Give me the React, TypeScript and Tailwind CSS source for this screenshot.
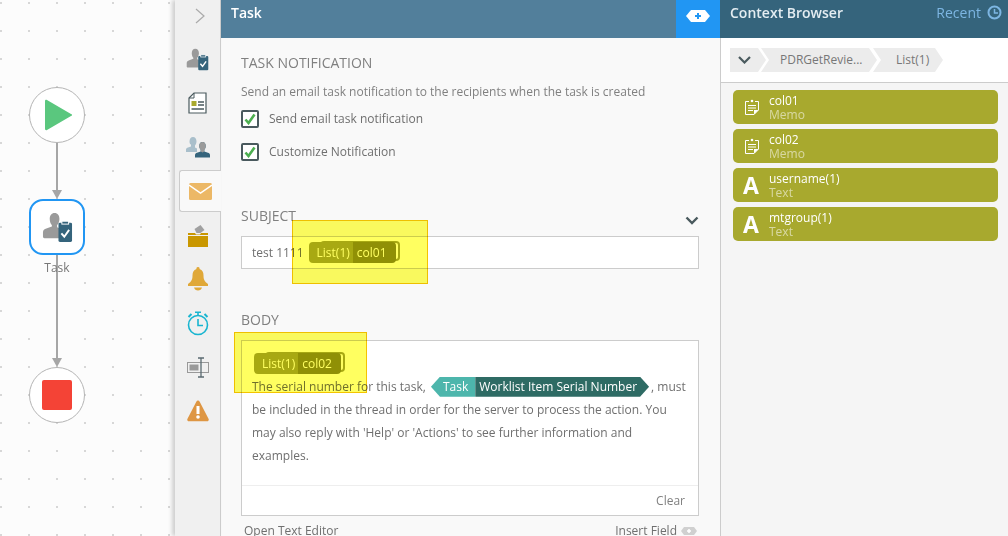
const font = { fontFamily: '"Open Sans", "Noto Sans", sans-serif' };

function UserClip({ size = 24 }: { size?: number }) {
  return (
    <svg width={size} height={size} viewBox="0 0 30 32">
      <path d="M12 1c3.2 0 5 2.6 5 6.2 0 2.6-1 5-2.4 6.2v2.4l2.4 1V27H1.5c-.8 0-1.5-.6-1.5-1.4v-4.8c0-2 1.6-3.200 3.500-3.800l5.700-2v-1.600C7.800 12.200 7 9.800 7 7.200 7 3.600 8.800 1 12 1z" fill="#9a9a9a" />
      <rect x="16" y="11" width="14" height="20" rx="1.500" fill="#35647c" />
      <rect x="19.500" y="9.500" width="7" height="3" fill="#35647c" stroke="#fff" strokeWidth="1" />
      <path d="M19 22l3 3.500 5-7" fill="none" stroke="#fff" strokeWidth="2" />
    </svg>
  );
}

function Check() {
  return (
    <div className="flex h-[18px] w-[18px] items-center justify-center rounded-[2px] border-2 border-[#4a5a5e] bg-white">
      <svg width="12" height="12" viewBox="0 0 12 12">
        <path d="M1.500 6.500l3 3.500 6-8.500" fill="none" stroke="#4caf50" strokeWidth="2.600" />
      </svg>
    </div>
  );
}

function SideIcon({ children, active }: { children: React.ReactNode; active?: boolean }) {
  return (
    <div
      className={
        active
          ? "relative z-10 -mr-px my-px ml-[4px] flex h-[42px] items-center justify-center rounded-l-[3px] border border-r-0 border-[#ccc] bg-[#f9f9f9]"
          : "flex h-[44px] items-center justify-center"
      }
    >
      {children}
    </div>
  );
}

function FieldPill({ label }: { label: string }) {
  return (
    <span className="relative inline-flex h-[21px] items-center text-[12px] text-white">
      <span className="absolute -right-[4px] -top-[1px] h-[20px] w-[80px] rounded-[4px] border-2 border-l-0 border-[#a8a92e] bg-white" />
      <span className="relative flex h-[21px] items-center rounded-l-[4px] bg-[#a8a92e] pl-[8px] pr-[3px]">List(1)</span>
      <span className="relative flex h-[21px] items-center rounded-r-[4px] bg-[#909010] pl-[4px] pr-[9px]">{label}</span>
    </span>
  );
}

function MemoIcon() {
  return (
    <svg width="16" height="17" viewBox="0 0 16 17" fill="none" stroke="#fff" strokeWidth="1">
      <path d="M5 2.500H1.500v13H10l4.500-4.500V2.500H11" />
      <circle cx="8" cy="2" r="1.300" fill="#fff" stroke="none" />
      <path d="M4 6.500h8M4 9h8M4 11.500h5" />
      <path d="M10 15.500V11h4.500z" fill="#fff" stroke="none" />
    </svg>
  );
}

function ContextItem({ name, type, memo }: { name: string; type: string; memo?: boolean }) {
  return (
    <div className="flex h-[34px] items-center rounded-[5px] bg-[#a8a92e] pl-[11px]">
      <div className="flex w-[25px] shrink-0 items-center">
        {memo ? <MemoIcon /> : <span className="-ml-px text-[23px] font-bold leading-none text-white">A</span>}
      </div>
      <div className="pt-[2px] text-[12px] leading-[14.500px]">
        <div className="text-white">{name}</div>
        <div className="text-white/55">{type}</div>
      </div>
    </div>
  );
}

export default function App() {
  return (
    <div className="flex h-[536px] w-[1008px] overflow-hidden bg-white" style={font}>
      {/* Canvas */}
      <div className="relative w-[175px] shrink-0 bg-[#fcfcfc] bg-[radial-gradient(#d4d4d4_0.7px,transparent_0.8px)] bg-[size:28px_28px] bg-[position:-13px_-11px]">
        <div className="absolute left-[56px] top-[143px] h-[50px] w-[2px] bg-[#a6a6a6]" />
        <div className="absolute left-[52px] top-[190px] h-0 w-0 border-x-[5px] border-t-[9px] border-x-transparent border-t-[#a6a6a6]" />
        <div className="absolute left-[56px] top-[255px] h-[106px] w-[2px] bg-[#a6a6a6]" />
        <div className="absolute left-[52px] top-[358px] h-0 w-0 border-x-[5px] border-t-[9px] border-x-transparent border-t-[#a6a6a6]" />
        <div className="absolute left-[29px] top-[87px] flex h-[56px] w-[56px] items-center justify-center rounded-full border border-[#b5b5b5] bg-white">
          <svg width="30" height="34" viewBox="0 0 30 34" className="ml-[3px]">
            <path d="M3 2l24 14a1 1 0 0 1 0 2L3 32c-1 .5-2 0-2-1V3c0-1 1-1.500 2-1z" fill="#5ac77e" />
          </svg>
        </div>
        <div className="absolute left-[29px] top-[199px] flex h-[56px] w-[56px] items-center justify-center rounded-[14px] border-2 border-[#2196f3] bg-white">
          <UserClip size={31} />
        </div>
        <div className="absolute left-[29px] top-[259px] w-[56px] text-center text-[12px] text-[#777]">Task</div>
        <div className="absolute left-[29px] top-[367px] flex h-[56px] w-[56px] items-center justify-center rounded-full border border-[#b5b5b5] bg-white">
          <div className="h-[30px] w-[30px] rounded-[2px] bg-[#f44336]" />
        </div>
      </div>

      {/* Side tabs */}
      <div className="z-10 w-[46px] shrink-0 border-r border-[#ccc] bg-[#f0f0f0] shadow-[-3px_0_4px_rgba(0,0,0,0.18)]">
        <div className="flex h-[37px] items-center justify-center pb-[5px] pl-[5px]">
          <svg width="12" height="18" viewBox="0 0 12 18" fill="none" stroke="#aaa" strokeWidth="1.200">
            <path d="M2 2l8 7-8 7" />
          </svg>
        </div>
        <SideIcon>
          <UserClip size={23} />
        </SideIcon>
        <SideIcon>
          <svg width="19" height="22" viewBox="0 0 19 22">
            <path d="M6 1h12v20H1V6z" fill="#fff" stroke="#4a5a5e" strokeWidth="1.200" />
            <path d="M6 1v5H1" fill="none" stroke="#4a5a5e" />
            <rect x="3.500" y="9" width="5" height="5" fill="#a8a92e" />
            <path d="M10 10h6M10 13h6M3.500 17h12.500" stroke="#4a5a5e" strokeWidth="1.500" />
          </svg>
        </SideIcon>
        <SideIcon>
          <svg width="24" height="22" viewBox="0 0 24 22">
            <path d="M7 1c2.200 0 3.500 1.800 3.500 4.500 0 1.800-.8 3.200-1.500 4v2l2 1v3.500H0v-2.500c0-1.200 1-1.800 2-2.100l3-1v-1.900C4.300 8.700 3.500 7.300 3.500 5.500 3.500 2.800 4.800 1 7 1z" fill="#a9bfcb" />
            <path d="M16.500 6c2 0 3.200 1.600 3.200 4 0 1.600-.7 3-1.400 3.800v1.700l3.700 1.300c1 .3 2 1 2 2.200v2.500H9v-2.500c0-1.200 1-1.900 2-2.200l3.700-1.300v-1.700c-.7-.8-1.400-2.200-1.400-3.800 0-2.400 1.200-4 3.200-4z" fill="#35647c" />
            <path d="M16.500 6c2 0 3.200 1.600 3.200 4 0 1.600-.7 3-1.400 3.800v1.700l-1.800 1-1.800-1v-1.700c-.7-.8-1.400-2.200-1.400-3.800 0-2.400 1.200-4 3.200-4z" fill="#9a9a9a" />
          </svg>
        </SideIcon>
        <SideIcon active>
          <svg width="23" height="17" viewBox="0 0 23 17">
            <rect width="23" height="17" rx="1.500" fill="#ecb866" />
            <path d="M0 2l11.500 8L23 2" fill="none" stroke="#fff" strokeWidth="1.500" />
          </svg>
        </SideIcon>
        <SideIcon>
          <svg width="20" height="23" viewBox="0 0 20 23">
            <path d="M6.500 5l6-4 4 5-4 3h-4z" fill="#a0a0a0" />
            <path d="M0 9h7l1 1.500h4l1-1.500h7v2H0z" fill="#c99700" />
            <rect y="12" width="20" height="11" fill="#c99700" />
          </svg>
        </SideIcon>
        <SideIcon>
          <svg width="20" height="24" viewBox="0 0 20 24" fill="#e0a838">
            <path d="M10 0a1.500 1.500 0 0 1 1.500 2c3 1 4 3.500 4 6.500 0 4 1 6 4.500 8.500v2H0v-2c3.500-2.500 4.500-4.500 4.500-8.500 0-3 1-5.500 4-6.500A1.500 1.500 0 0 1 10 0z" />
            <path d="M6 20.500h8c-.5 2-2 3-4 3s-3.500-1-4-3z" />
          </svg>
        </SideIcon>
        <SideIcon>
          <svg width="22" height="25" viewBox="0 0 22 25" fill="none" stroke="#18b5d0" strokeWidth="1.600">
            <circle cx="11" cy="14" r="9.500" />
            <path d="M11 8v6.500h5M8 1.200h6M11 1.500v3" />
            <path d="M1.500 6l3-3M20.500 6l-3-3" strokeWidth="2" />
          </svg>
        </SideIcon>
        <SideIcon>
          <svg width="22" height="21" viewBox="0 0 22 21">
            <rect x="0.500" y="5.500" width="21" height="10" fill="none" stroke="#999" />
            <rect x="2.500" y="7.500" width="9" height="6" fill="#999" />
            <path d="M11 1h6M14 1v19M11 20h6" stroke="#5a6a70" strokeWidth="1.300" fill="none" />
          </svg>
        </SideIcon>
        <SideIcon>
          <svg width="22" height="22" viewBox="0 0 22 22">
            <path d="M11 0.500c.8 0 1.300.4 1.700 1.200l8.800 17c.7 1.300 0 2.600-1.400 2.600H1.900c-1.400 0-2.100-1.300-1.400-2.600l8.800-17C9.700.9 10.200.5 11 .5z" fill="#de9643" />
            <rect x="9.500" y="6" width="3" height="8" fill="#fff" />
            <circle cx="11" cy="17" r="1.800" fill="#fff" />
          </svg>
        </SideIcon>
      </div>

      {/* Task panel */}
      <div className="relative flex w-[499px] shrink-0 flex-col bg-[#f9f9f9]">
        <div className="flex h-[38px] shrink-0 items-start justify-between bg-[#527f9b]">
          <span className="pl-[10px] pt-[2px] text-[14px] font-semibold text-white">Task</span>
          <div className="flex h-[38px] w-[44px] items-center justify-center bg-[#2196f3] pb-[6px]">
            <svg width="24" height="12" viewBox="0 0 24 12">
              <path d="M5 0h14l5 6-5 6H5L0 6z" fill="#fff" />
              <path d="M12 3v6M9 6h6" stroke="#2196f3" strokeWidth="2" />
            </svg>
          </div>
        </div>
        <div className="px-[20px] text-[#6f6f6f]">
          <h2 className="mt-[15px] text-[14px] leading-[20px] text-[#808080]">TASK NOTIFICATION</h2>
          <p className="mt-[10px] text-[12px] leading-[17px] text-[#808080]">
            Send an email task notification to the recipients when the task is created
          </p>
          <div className="mt-[10px] flex items-center gap-[10px] text-[12px]">
            <Check />
            <span>Send email task notification</span>
          </div>
          <div className="mt-[15px] flex items-center gap-[10px] text-[12px]">
            <Check />
            <span>Customize Notification</span>
          </div>

          <div className="mt-[44px] flex h-[20px] items-center justify-between text-[14px] text-[#808080]">
            <span>SUBJECT</span>
            <svg width="14" height="9" viewBox="0 0 14 9" fill="none" stroke="#4a5a5e" strokeWidth="2.400" className="mr-px mt-[10px]">
              <path d="M1.500 1.500L7 7l5.500-5.500" />
            </svg>
          </div>
          <div className="relative mt-[11px] flex h-[33px] w-[458px] items-center gap-[5px] border border-[#ccc] bg-white pl-[10px] text-[12px]">
            <span>test 1111</span>
            <FieldPill label="col01" />
          </div>

          <div className="mt-[41px] h-[20px] text-[14px] leading-[20px] text-[#808080]">BODY</div>
          <div className="relative mt-[10px] flex h-[176px] w-[458px] flex-col border border-[#ccc] bg-white">
            <div className="flex-1 px-[10px] pt-[11px] text-[12px] leading-[23px]">
              <div className="flex h-[22px] items-center pl-[2px]">
                <FieldPill label="col02" />
              </div>
              <p className="mt-px">
                The serial number for this task,{" "}
                <span className="relative -top-px mx-[2px] inline-flex h-[20px] align-middle font-medium text-white">
                  <span className="flex items-center bg-[#4db6ac] pl-[12px] pr-[7px] [clip-path:polygon(9px_0,100%_0,100%_100%,9px_100%,0_50%)]">Task</span>
                  <span className="flex items-center bg-[#2e6b64] pl-[4px] pr-[12px] [clip-path:polygon(0_0,calc(100%-9px)_0,100%_50%,calc(100%-9px)_100%,0_100%)]">Worklist Item Serial Number</span>
                </span>
                , must be included in the thread in order for the server to process the action. You may also reply with 'Help' or 'Actions' to see further information and examples.
              </p>
            </div>
            <div className="flex h-[30px] items-center justify-end border-t border-[#eee] pr-[13px] text-[12px] text-[#808080]">Clear</div>
          </div>
          <div className="mt-[6px] flex items-center justify-between pl-[3px] pr-[3px] text-[12px]">
            <span>Open Text Editor</span>
            <span className="flex items-center gap-[4px]">
              Insert Field
              <svg width="16" height="8" viewBox="0 0 16 8">
                <path d="M3 0h10l3 4-3 4H3L0 4z" fill="#d0d0d0" />
                <path d="M8 2v4M6 4h4" stroke="#fff" strokeWidth="1.500" />
              </svg>
            </span>
          </div>
        </div>

        {/* Yellow highlighter marks */}
        <div className="absolute left-[71px] top-[220px] h-[64px] w-[136px] border border-[#f4c400] bg-[#ffff60] mix-blend-multiply" />
        <div className="absolute left-[13px] top-[332px] h-[61px] w-[133px] border border-[#f4c400] bg-[#ffff60] mix-blend-multiply" />
      </div>

      {/* Context browser */}
      <div className="flex w-[288px] shrink-0 flex-col border-l border-[#ccc] bg-[#f5f5f5]">
        <div className="-ml-px flex h-[38px] shrink-0 items-start justify-between bg-[#35647c]">
          <span className="pl-[10px] pt-[2px] text-[14px] font-semibold text-[#e4edf2]">Context Browser</span>
          <span className="flex items-center gap-[6px] pr-[6px] pt-[2px] text-[14px] text-[#7db6e3]">
            Recent
            <svg width="15" height="15" viewBox="0 0 15 15" fill="none" stroke="#7db6e3" strokeWidth="2">
              <circle cx="7.500" cy="7.500" r="6" />
              <path d="M7.500 4v4H11" strokeWidth="1.500" />
            </svg>
          </span>
        </div>
        <div className="flex h-[45px] shrink-0 items-center border-b border-[#ccc] bg-white pl-[9px] text-[12px] text-[#777]">
          <div className="flex h-[24px] w-[36px] items-center bg-[#ececec] pl-[8px] [clip-path:polygon(0_0,28px_0,100%_50%,28px_100%,0_100%)]">
            <svg width="13" height="8" viewBox="0 0 13 8" fill="none" stroke="#4a5a5e" strokeWidth="2.200">
              <path d="M1 1l5.500 5.500L12 1" />
            </svg>
          </div>
          <div className="-ml-[5px] flex h-[24px] w-[116px] items-center bg-[#ececec] pb-px pl-[19px] [clip-path:polygon(0_0,calc(100%-8px)_0,100%_50%,calc(100%-8px)_100%,0_100%,8px_50%)]">
            PDRGetRevie...
          </div>
          <div className="-ml-[4px] flex h-[24px] w-[70px] items-center bg-[#ececec] pb-px pl-[23px] [clip-path:polygon(0_0,calc(100%-8px)_0,100%_50%,calc(100%-8px)_100%,0_100%,8px_50%)]">
            List(1)
          </div>
        </div>
        <div className="flex flex-col gap-[5px] pl-[12px] pr-[10px] pt-[7px]">
          <ContextItem name="col01" type="Memo" memo />
          <ContextItem name="col02" type="Memo" memo />
          <ContextItem name="username(1)" type="Text" />
          <ContextItem name="mtgroup(1)" type="Text" />
        </div>
      </div>
    </div>
  );
}
